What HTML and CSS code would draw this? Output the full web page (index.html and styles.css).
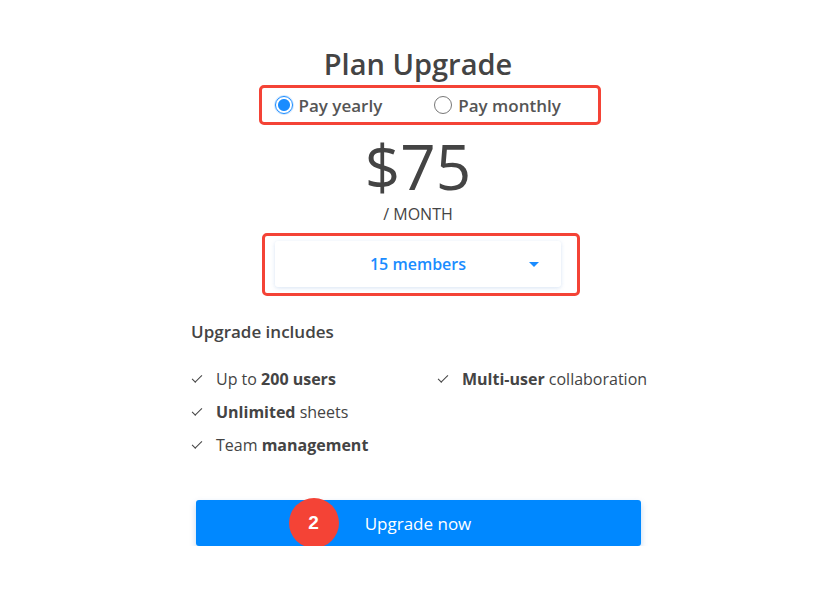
FILE: index.html
```html
<!DOCTYPE html>
<html lang="en">
<head>
    <meta charset="UTF-8">
    <title>Plan Upgrade</title>
    <link rel="stylesheet" href="styles.css">
</head>
<body>
    <div class="card">
        <h2 class="title">Plan Upgrade</h2>
        <div class="hl billing">
            <label class="radio"><span class="dot on"></span>Pay yearly</label>
            <label class="radio"><span class="dot"></span>Pay monthly</label>
        </div>
        <div class="price">$75</div>
        <div class="per">/ MONTH</div>
        <div class="hl members-box">
            <div class="select">
                <span>15 members</span>
                <svg class="caret" width="10" height="6" viewBox="0 0 10 6"><path d="M0 0h10L5 5z" fill="#1a8cff"/></svg>
            </div>
        </div>
        <div class="includes">
            <h3>Upgrade includes</h3>
            <ul class="features">
                <li><span class="tick"></span><span>Up to <b>200 users</b></span></li>
                <li><span class="tick"></span><span><b>Multi-user</b> collaboration</span></li>
                <li><span class="tick"></span><span><b>Unlimited</b> sheets</span></li>
                <li></li>
                <li><span class="tick"></span><span>Team <b>management</b></span></li>
            </ul>
        </div>
        <div class="btn-wrap">
            <button class="upgrade">Upgrade now</button>
            <span class="badge">2</span>
        </div>
    </div>
</body>
</html>
```
FILE: styles.css
```css
* {
    box-sizing: border-box;
}
body {
    margin: 0;
    background: #fff;
    font-family: "Open Sans", "Noto Sans", sans-serif;
    color: #444;
}
.card {
    width: 836px;
    display: flex;
    flex-direction: column;
    align-items: center;
    padding-top: 45px;
}
.title {
    margin: 0;
    font-size: 29px;
    font-weight: 600;
    line-height: 38px;
    color: #444;
}
.hl {
    border: 3px solid #f44336;
    border-radius: 5px;
}
.billing {
    width: 342px;
    height: 40px;
    margin-top: 2px;
    margin-left: 23px;
    display: flex;
    align-items: center;
    padding-left: 13px;
    gap: 52px;
}
.radio {
    display: flex;
    align-items: center;
    font-size: 17px;
    font-weight: 600;
    color: #555;
    gap: 6px;
}
.dot {
    width: 18px;
    height: 18px;
    border-radius: 50%;
    border: 1px solid #777;
    background: #fff;
}
.dot.on {
    border: 1px solid #1a8cff;
    box-shadow: 0 0 0 1px #cfe6ff;
    background: radial-gradient(circle, #1a8cff 0 5.5px, #fff 6.5px);
}
.price {
    margin-top: 13px;
    font-size: 62px;
    line-height: 56px;
    color: #444;
}
.per {
    font-size: 16px;
    font-weight: 500;
    color: #444;
    margin-top: 9px;
    line-height: 22px;
}
.members-box {
    margin-top: 8px;
    margin-left: 6px;
    width: 318px;
    height: 63px;
    padding: 5px 16px 0 10px;
}
.select {
    height: 46px;
    background: #fff;
    border-radius: 3px;
    box-shadow: 0 1px 4px rgba(60, 120, 200, 0.2);
    display: flex;
    align-items: center;
    justify-content: center;
    position: relative;
    color: #1a8cff;
    font-size: 16px;
    font-weight: 600;
}
.caret {
    position: absolute;
    right: 22px;
    top: 21px;
}
.includes {
    width: 460px;
    margin-left: 6px;
    margin-top: 24px;
}
.includes h3 {
    margin: 0;
    font-size: 17px;
    font-weight: 600;
    color: #444;
    line-height: 24px;
}
.features {
    list-style: none;
    margin: 24px 0 0;
    padding: 0;
    display: grid;
    grid-template-columns: 246px 1fr;
    row-gap: 10px;
}
.features li {
    display: flex;
    align-items: center;
    font-size: 16px;
    line-height: 23px;
    color: #444;
    white-space: nowrap;
}
.features b {
    font-weight: 700;
}
.tick {
    width: 10px;
    height: 5px;
    border-left: 1.5px solid #444;
    border-bottom: 1.5px solid #444;
    transform: rotate(-45deg);
    margin: 0 14px 4px 1px;
}
.btn-wrap {
    position: relative;
    margin-top: 43px;
}
.upgrade {
    width: 445px;
    height: 46px;
    border: 0;
    border-radius: 3px;
    background: #0088ff;
    color: #fff;
    font-family: "Open Sans", sans-serif;
    font-size: 17px;
    font-weight: 500;
    box-shadow: 0 3px 6px rgba(0, 100, 200, 0.25);
}
.badge {
    position: absolute;
    left: 93px;
    top: -2px;
    width: 50px;
    height: 50px;
    border-radius: 50%;
    background: #f44336;
    color: #fff;
    font-family: "Liberation Sans", Arial, sans-serif;
    font-weight: 700;
    font-size: 19px;
    display: flex;
    align-items: center;
    justify-content: center;
}
```
